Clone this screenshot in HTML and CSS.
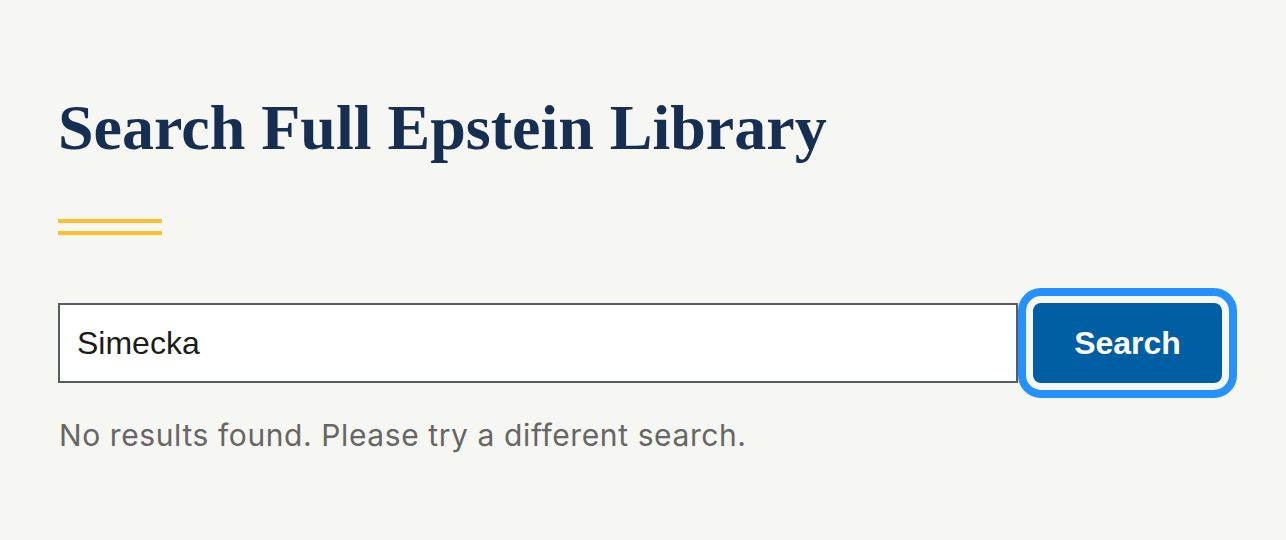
FILE: index.html
```html
<!DOCTYPE html>
<html lang="en">
<head>
<meta charset="utf-8">
<title>Search Full Epstein Library</title>
<link rel="stylesheet" href="styles.css">
</head>
<body>
<main class="page">
  <h1 class="title">Search Full Epstein Library</h1>
  <div class="rule"><span class="rule-line"></span><span class="rule-line"></span></div>
  <form class="search" onsubmit="return false;">
    <input class="search-input" type="text" value="Simecka" aria-label="Search">
    <button class="search-btn" type="submit">Search</button>
  </form>
  <p class="message">No results found. Please try a different search.</p>
</main>
</body>
</html>
```

FILE: styles.css
```css
html, body {
  margin: 0;
  padding: 0;
  background: #f6f6f2;
}
.page {
  padding: 89px 0 0 58px;
  width: 1180px;
  font-family: "Liberation Sans", Arial, sans-serif;
}
.title {
  margin: 0;
  font-family: "Liberation Serif", "Times New Roman", serif;
  font-weight: 700;
  font-size: 64px;
  line-height: 77px;
  color: #162e51;
}
.rule {
  margin-top: 53px;
  display: flex;
  flex-direction: column;
  gap: 8px;
  width: 104px;
}
.rule-line {
  display: block;
  height: 4px;
  background: #ffbe2e;
}
.search {
  margin-top: 68px;
  display: flex;
  gap: 15px;
  width: 1164px;
}
.search-input {
  flex: 1;
  box-sizing: border-box;
  height: 80px;
  margin: 0;
  padding: 0 17px;
  border: 2px solid #565c65;
  border-radius: 0;
  background: #fff;
  font-family: "Liberation Sans", Arial, sans-serif;
  font-size: 32px;
  color: #1b1b1b;
}
.search-btn {
  box-sizing: border-box;
  width: 189px;
  height: 80px;
  margin: 0;
  border: 0;
  border-radius: 8px;
  background: #005ea2;
  color: #fff;
  font-family: "Liberation Sans", Arial, sans-serif;
  font-weight: 700;
  font-size: 32px;
  outline: 8px solid #2491ff;
  outline-offset: 7px;
}
.message {
  margin: 34px 0 0 1px;
  font-family: Inter, "Liberation Sans", sans-serif;
  font-size: 30px;
  line-height: 36px;
  letter-spacing: 0.6px;
  color: #666666;
}
```
